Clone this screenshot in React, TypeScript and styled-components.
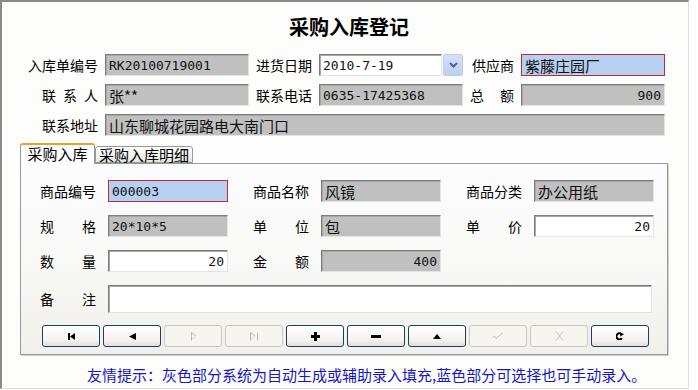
import styled, { createGlobalStyle } from "styled-components"

const CJK = `"Noto Sans CJK SC", "Noto Sans", sans-serif`
const MONO = `"DejaVu Sans Mono", "Noto Sans CJK SC", monospace`

const GlobalStyle = createGlobalStyle`
  html, body {
    margin: 0;
    padding: 0;
    background: #ffffff;
  }
  body {
    font-family: ${CJK};
    color: #000;
  }
`

type Tone = "gray" | "white" | "blue"

// 一行标签: spread 은 글자를 양끝 정렬
const Lbl = ({ text, w, spread }: { text: string; w: number; spread?: boolean }) => (
  <LabelBox $w={w} $spread={spread}>
    {spread ? text.split("").map((c, i) => <span key={i}>{c}</span>) : text}
  </LabelBox>
)

const Icon = ({ kind }: { kind: string }) => {
  switch (kind) {
    case "first":
      return (
        <svg width="7" height="7" viewBox="0 0 7 7">
          <rect x="0" y="0" width="2" height="7" fill="#000" />
          <polygon points="7,0 2,3.5 7,7" fill="#000" />
        </svg>
      )
    case "prev":
      return (
        <svg width="7" height="7" viewBox="0 0 7 7">
          <polygon points="7,0 0,3.5 7,7" fill="#000" />
        </svg>
      )
    case "next":
      return (
        <svg width="7" height="9" viewBox="0 0 7 9">
          <path d="M1.5 0.5 V8.5 M1.5 0.5 L6 4" stroke="#b9b8b2" strokeWidth="1" fill="none" />
          <path d="M2.5 7 L6 4.6" stroke="#dedcd4" strokeWidth="1" fill="none" />
        </svg>
      )
    case "last":
      return (
        <svg width="10" height="9" viewBox="0 0 10 9">
          <path d="M1.5 0.5 V8.5 M1.5 0.5 L6 4 M8.5 0.5 V8.5" stroke="#b9b8b2" strokeWidth="1" fill="none" />
          <path d="M2.5 7 L6 4.6" stroke="#dedcd4" strokeWidth="1" fill="none" />
        </svg>
      )
    case "add":
      return (
        <svg width="9" height="9" viewBox="0 0 9 9">
          <rect x="3" y="0" width="3" height="9" fill="#000" />
          <rect x="0" y="3" width="9" height="3" fill="#000" />
        </svg>
      )
    case "del":
      return (
        <svg width="10" height="3" viewBox="0 0 10 3">
          <rect x="0" y="0" width="10" height="3" fill="#000" />
        </svg>
      )
    case "up":
      return (
        <svg width="8" height="5" viewBox="0 0 8 5">
          <polygon points="0,5 4,0 8,5" fill="#000" />
        </svg>
      )
    case "ok":
      return (
        <svg width="12" height="8" viewBox="0 0 12 8">
          <path d="M0.5 5.5 L2.5 4 L4 6.5 L11 0.5" stroke="#c4c3bc" strokeWidth="1" fill="none" />
        </svg>
      )
    case "cancel":
      return (
        <svg width="9" height="10" viewBox="0 0 9 10">
          <path d="M1 0.5 L8 9.5 M8 0.5 L1 9.5" stroke="#c4c3bc" strokeWidth="1" fill="none" />
        </svg>
      )
    default:
      return (
        <svg width="8" height="8" viewBox="0 0 8 8">
          <path d="M5.8 6.2 A3 3 0 1 1 4.6 1.6" stroke="#000" strokeWidth="2" fill="none" />
          <polygon points="3.5,-0.2 8,2.2 4.4,4.6" fill="#000" />
        </svg>
      )
  }
}

const buttons = [
  { kind: "first", on: true },
  { kind: "prev", on: true },
  { kind: "next", on: false },
  { kind: "last", on: false },
  { kind: "add", on: true },
  { kind: "del", on: true },
  { kind: "up", on: true },
  { kind: "ok", on: false },
  { kind: "cancel", on: false },
  { kind: "refresh", on: true },
]

const App = () => {
  return (
    <>
      <GlobalStyle />
      <Frame>
        <Title>采购入库登记</Title>
        <TopGrid>
          <Lbl text="入库单编号" w={70} />
          <Field $tone="gray">RK20100719001</Field>
          <Lbl text="进货日期" w={56} />
          <DateBox>
            <Field $tone="white">2010-7-19</Field>
            <DropBtn>
              <svg width="9" height="6" viewBox="0 0 9 6">
                <polyline points="1,1 4.5,4.5 8,1" stroke="#4d6185" strokeWidth="2" fill="none" />
              </svg>
            </DropBtn>
          </DateBox>
          <Lbl text="供应商" w={44} />
          <Field $tone="blue" $cjk>紫藤庄园厂</Field>

          <Lbl text="联系人" w={56} spread />
          <Field $tone="gray" $cjk>张**</Field>
          <Lbl text="联系电话" w={56} />
          <Field $tone="gray">0635-17425368</Field>
          <Lbl text="总额" w={44} spread />
          <Field $tone="gray" $right>900</Field>

          <Lbl text="联系地址" w={56} />
          <Field $tone="gray" $cjk $span={5}>山东聊城花园路电大南门口</Field>
        </TopGrid>

        <Tabs>
          <TabStrip>
            <Tab $active>采购入库</Tab>
            <Tab>采购入库明细</Tab>
          </TabStrip>
          <Panel>
            <FieldRow>
              <Group>
                <Lbl text="商品编号" w={56} />
                <Field $tone="blue" $w={120}>000003</Field>
              </Group>
              <Group>
                <Lbl text="商品名称" w={56} />
                <Field $tone="gray" $w={120} $cjk>风镜</Field>
              </Group>
              <Group>
                <Lbl text="商品分类" w={56} />
                <Field $tone="gray" $w={120} $cjk>办公用纸</Field>
              </Group>
            </FieldRow>
            <FieldRow>
              <Group>
                <Lbl text="规格" w={56} spread />
                <Field $tone="gray" $w={120}>20*10*5</Field>
              </Group>
              <Group>
                <Lbl text="单位" w={56} spread />
                <Field $tone="gray" $w={120} $cjk>包</Field>
              </Group>
              <Group>
                <Lbl text="单价" w={56} spread />
                <Field $tone="white" $w={120} $right>20</Field>
              </Group>
            </FieldRow>
            <FieldRow>
              <Group>
                <Lbl text="数量" w={56} spread />
                <Field $tone="white" $w={120} $right>20</Field>
              </Group>
              <Group>
                <Lbl text="金额" w={56} spread />
                <Field $tone="gray" $w={120} $right>400</Field>
              </Group>
            </FieldRow>
            <FieldRow>
              <Group>
                <Lbl text="备注" w={56} spread />
                <Field $tone="white" $w={544} $h={28}></Field>
              </Group>
            </FieldRow>
            <ButtonBar>
              {buttons.map((b) => (
                <NavButton key={b.kind} $on={b.on}>
                  <Icon kind={b.kind} />
                </NavButton>
              ))}
            </ButtonBar>
          </Panel>
        </Tabs>

        <Hint>友情提示：灰色部分系统为自动生成或辅助录入填充,蓝色部分可选择也可手动录入。</Hint>
      </Frame>
    </>
  )
}

const Frame = styled.div`
  box-sizing: border-box;
  width: 689px;
  height: 389px;
  border-top: 2px solid #8a8a8a;
  border-left: 2px solid #8a8a8a;
  border-right: 1px solid #e2e1dc;
  border-bottom: 1px solid #e2e1dc;
  background: #fdfdfb;
  display: flex;
  flex-direction: column;
`
const Title = styled.div`
  margin-top: 13px;
  height: 24px;
  line-height: 24px;
  text-align: center;
  font-size: 20px;
  font-weight: 700;
  padding-left: 8px;
  font-family: ${CJK};
`
const TopGrid = styled.div`
  display: grid;
  grid-template-columns: 70px 144px 56px 144px 44px 144px;
  grid-auto-rows: 22px;
  column-gap: 7px;
  row-gap: 8px;
  align-items: center;
  margin: 15px 0 0 26px;
`
const LabelBox = styled.div<{ $w: number; $spread?: boolean }>`
  width: ${(p) => p.$w}px;
  justify-self: end;
  display: flex;
  justify-content: ${(p) => (p.$spread ? "space-between" : "flex-end")};
  font-size: 14px;
  line-height: 22px;
  white-space: nowrap;
  flex-shrink: 0;
`
const Field = styled.div<{ $tone?: Tone; $right?: boolean; $cjk?: boolean; $w?: number; $h?: number; $span?: number }>`
  box-sizing: border-box;
  width: ${(p) => (p.$w ? `${p.$w}px` : "100%")};
  height: ${(p) => p.$h ?? 22}px;
  ${(p) => (p.$span ? `grid-column: span ${p.$span};` : "")}
  display: flex;
  align-items: center;
  justify-content: ${(p) => (p.$right ? "flex-end" : "flex-start")};
  padding: 0 3px;
  background: ${(p) => (p.$tone === "gray" ? "#c0c0c0" : p.$tone === "blue" ? "#b5d0f0" : "#ffffff")};
  border: 1px solid;
  border-color: ${(p) => (p.$tone === "blue" ? "#bf2a2e" : "#7d7d7d #e4e4e4 #e4e4e4 #7d7d7d")};
  box-shadow: ${(p) => (p.$tone === "blue" ? "none" : "inset 1px 1px 0 #a6a6a6")};
  font-family: ${(p) => (p.$cjk ? CJK : MONO)};
  font-size: ${(p) => (p.$cjk ? 15 : 13)}px;
  color: #111;
  white-space: nowrap;
  overflow: hidden;
`
const DateBox = styled.div`
  display: flex;
  gap: 1px;
  height: 22px;
`
const DropBtn = styled.div`
  box-sizing: border-box;
  flex: 0 0 20px;
  height: 22px;
  display: flex;
  align-items: center;
  justify-content: center;
  border: 1px solid #c2cde8;
  border-radius: 2px;
  background: linear-gradient(#d6e0fb, #bccdf6);
`
const Tabs = styled.div`
  margin: 7px 0 0 18px;
  width: 648px;
`
const TabStrip = styled.div`
  display: flex;
  align-items: flex-end;
  height: 20px;
`
const Tab = styled.div<{ $active?: boolean }>`
  box-sizing: border-box;
  position: relative;
  z-index: ${(p) => (p.$active ? 1 : 0)};
  width: ${(p) => (p.$active ? 75 : 98)}px;
  height: ${(p) => (p.$active ? 21 : 17)}px;
  margin-bottom: ${(p) => (p.$active ? -1 : 0)}px;
  border: 1px solid #919b9c;
  border-bottom: ${(p) => (p.$active ? "none" : "1px solid #919b9c")};
  border-top: ${(p) => (p.$active ? "2px solid #e6a32e" : "1px solid #919b9c")};
  border-radius: 3px 3px 0 0;
  background: ${(p) => (p.$active ? "#fcfcfe" : "linear-gradient(#ffffff, #f3f2ec 60%, #e6e4da)")};
  font-size: 15px;
  line-height: ${(p) => (p.$active ? 17 : 15)}px;
  text-align: center;
  white-space: nowrap;
`
const Panel = styled.div`
  box-sizing: border-box;
  height: 192px;
  border: 1px solid #919b9c;
  box-shadow: 1px 1px 0 #d3d2cb;
  background: linear-gradient(#fcfcfe, #f9f9f7 50%, #f1f0ea);
  display: grid;
  grid-template-rows: 22px 22px 22px 28px 22px;
  row-gap: 13px;
  padding: 16px 0 0 19px;
`
const FieldRow = styled.div`
  display: flex;
  align-items: center;
  gap: 25px;
`
const Group = styled.div`
  display: flex;
  align-items: center;
  gap: 12px;
`
const ButtonBar = styled.div`
  display: flex;
  gap: 3px;
  margin: -1px 0 0 2px;
`
const NavButton = styled.div<{ $on: boolean }>`
  box-sizing: border-box;
  width: 58px;
  height: 22px;
  display: flex;
  align-items: center;
  justify-content: center;
  border-radius: 3px;
  border: 1px solid ${(p) => (p.$on ? "#1e3c67" : "#cac8bd")};
  background: ${(p) => (p.$on ? "linear-gradient(#ffffff, #f4f3ef 70%, #e2dfd6)" : "#f6f5ef")};
`
const Hint = styled.div`
  margin: 10px 0 0 85px;
  font-size: 15px;
  line-height: 20px;
  color: #1717c4;
  white-space: nowrap;
`

export default App
